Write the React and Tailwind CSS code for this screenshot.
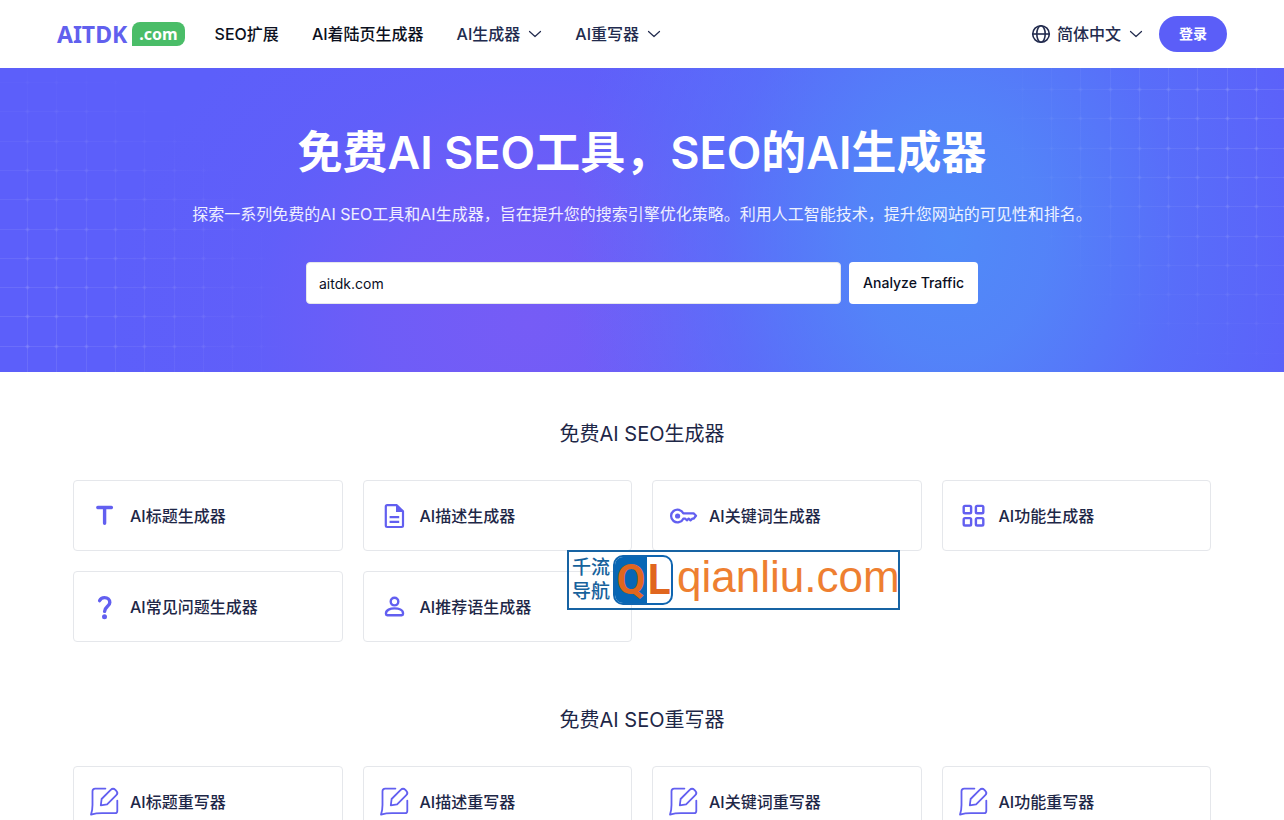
import React, { useState } from "react";

const ICONS = {
  title: (
    <g fill="none" stroke="currentColor" strokeWidth="3.4" strokeLinecap="round" strokeLinejoin="round">
      <path d="M7.8 5.5h13.6M14.6 5.5v15.8" />
    </g>
  ),
  description: (
    <>
      <path
        d="M7.2 3.2h9.6l6.2 6.2v14.2a1.4 1.4 0 0 1-1.4 1.4H7.2a1.4 1.4 0 0 1-1.4-1.4V4.6a1.4 1.4 0 0 1 1.4-1.4z"
        fill="none"
        stroke="currentColor"
        strokeWidth="2.2"
        strokeLinejoin="round"
      />
      <path d="M16 3v7h7z" fill="currentColor" />
      <path d="M9.6 15.2h9.6M9.6 19.8h9.6" stroke="currentColor" strokeWidth="2.2" />
    </>
  ),
  keyword: (
    <>
      <path
        d="M14.3 11.3A6.4 6.4 0 1 0 14.3 16.7h2l1.6 1.6 1.8-1.6 1.8 1.6 1.9-1.6h1.2l2.4-2.9-2.4-2.5z"
        fill="none"
        stroke="currentColor"
        strokeWidth="2.3"
        strokeLinejoin="round"
      />
      <circle cx="8.6" cy="14" r="2.6" fill="currentColor" />
    </>
  ),
  feature: (
    <g fill="none" stroke="currentColor" strokeWidth="2.4">
      <rect x="4.7" y="3.9" width="7.4" height="7.4" rx="1.3" />
      <rect x="16.9" y="3.9" width="7.4" height="7.4" rx="1.3" />
      <rect x="4.7" y="16.1" width="7.4" height="7.4" rx="1.3" />
      <rect x="16.9" y="16.1" width="7.4" height="7.4" rx="1.3" />
    </g>
  ),
  faq: (
    <>
      <path
        d="M9.6 7.7C10.5 5.6 12.3 4.6 14.6 4.6c3 0 5.2 2 5.2 4.8 0 4-5.2 4.4-5.2 9"
        fill="none"
        stroke="currentColor"
        strokeWidth="3.4"
        strokeLinecap="round"
      />
      <circle cx="14.5" cy="23.8" r="2.5" fill="currentColor" />
    </>
  ),
  testimonial: (
    <g fill="none" stroke="currentColor" strokeWidth="2.4">
      <circle cx="14.5" cy="8.6" r="3.8" />
      <path
        d="M6 20.2c0-3.2 4.2-4.8 8.5-4.8s8.5 1.6 8.5 4.8v.9a1.2 1.2 0 0 1-1.2 1.2H7.2A1.2 1.2 0 0 1 6 21.1z"
        strokeLinejoin="round"
      />
    </g>
  ),
  rewrite: (
    <g fill="none" stroke="currentColor" strokeWidth="1.8" strokeLinecap="round" strokeLinejoin="round">
      <path d="M15.4.6H5.2C3.3.6 2.5 1.6 2.5 3.3v13.8c0 3.9-.4 6.6-1.5 9.5 3.6-1 6.7-1.4 11-1.4h13.2c1.5 0 2.1-.7 2.1-2.2V12.6" />
      <path d="M10.8 17.3l.8-6.3 9.1-9.1c1.6-1.6 3.3-1.4 4.7 0l.9.9c1.4 1.4 1.4 2.9 0 4.3l-9.2 9.2z" />
    </g>
  ),
};

const generators = [
  { icon: "title", label: "AI标题生成器" },
  { icon: "description", label: "AI描述生成器" },
  { icon: "keyword", label: "AI关键词生成器" },
  { icon: "feature", label: "AI功能生成器" },
  { icon: "faq", label: "AI常见问题生成器" },
  { icon: "testimonial", label: "AI推荐语生成器" },
];

const rewriters = [
  { icon: "rewrite", label: "AI标题重写器" },
  { icon: "rewrite", label: "AI描述重写器" },
  { icon: "rewrite", label: "AI关键词重写器" },
  { icon: "rewrite", label: "AI功能重写器" },
];

const Chevron = () => (
  <svg viewBox="0 0 14 14" className="w-3.5 h-3.5" fill="none" stroke="currentColor" strokeWidth="1.2" strokeLinecap="round" strokeLinejoin="round" aria-hidden="true">
    <path d="M1.5 4.5L7 9.5l5.5-5" />
  </svg>
);

const Globe = () => (
  <svg viewBox="0 0 20 20" className="w-5 h-5" fill="none" stroke="currentColor" strokeWidth="1.6" aria-hidden="true">
    <circle cx="10" cy="10" r="8.3" />
    <ellipse cx="10" cy="10" rx="4.2" ry="8.3" />
    <path d="M1.7 10h16.6" />
  </svg>
);

const Header = () => (
  <header className="bg-white px-4">
    <div className="max-w-[1170px] h-[68px] mx-auto flex items-center justify-between">
      <div className="flex items-center">
        <a href="#" className="flex items-center gap-[5px] font-['Noto_Sans'] font-bold">
          <span className="text-[23px] leading-6 text-[#6160ee]">AITDK</span>
          <span className="h-6 px-[7px] rounded-lg rounded-bl-none bg-[#4abd68] text-white text-base leading-6">.com</span>
        </a>
        <nav className="ml-[30px] flex items-center gap-[33px] font-medium">
          <a href="#">SEO扩展</a>
          <a href="#">AI着陆页生成器</a>
          <button type="button" className="flex items-center gap-2 text-[#222b4e]">
            AI生成器 <Chevron />
          </button>
          <button type="button" className="flex items-center gap-2 text-[#222b4e]">
            AI重写器 <Chevron />
          </button>
        </nav>
      </div>
      <div className="flex items-center gap-4">
        <button type="button" className="flex items-center font-medium text-[#222b4e]">
          <Globe />
          <span className="ml-1.5 mr-2">简体中文</span>
          <Chevron />
        </button>
        <button type="button" className="h-9 px-5 rounded-full bg-[#5b5ef8] text-white text-sm font-bold">
          登录
        </button>
      </div>
    </div>
  </header>
);

const GRID_STEP = 29.3;
const steps = Array.from({ length: 12 }, (_, i) => i);

// faint grid lines that fade out from the given corner, with a soft dot on each crossing
const HeroGrid = ({ id, x0, y0, cx, cy, className }) => (
  <svg viewBox="0 0 330 304" className={className} aria-hidden="true">
    <defs>
      <radialGradient id={id} gradientUnits="userSpaceOnUse" cx={cx} cy={cy} r="290">
        <stop offset="0" stopColor="#fff" stopOpacity="0.1" />
        <stop offset="0.5" stopColor="#fff" stopOpacity="0.06" />
        <stop offset="1" stopColor="#fff" stopOpacity="0" />
      </radialGradient>
    </defs>
    <g fill={`url(#${id})`}>
      {steps.map((i) => (
        <rect key={`v${i}`} x={Math.round(x0 + i * GRID_STEP)} y="0" width="1" height="304" />
      ))}
      {steps.map((i) => (
        <rect key={`h${i}`} x="0" y={Math.round(y0 + i * GRID_STEP)} width="330" height="1" />
      ))}
      {steps.map((i) =>
        steps.map((j) => (
          <circle
            key={`c${i}-${j}`}
            cx={Math.round(x0 + i * GRID_STEP) + 0.5}
            cy={Math.round(y0 + j * GRID_STEP) + 0.5}
            r="2"
          />
        ))
      )}
    </g>
  </svg>
);

const Hero = () => {
  const [site, setSite] = useState("aitdk.com");

  return (
    <section className="relative overflow-hidden text-white text-center px-4 pt-[60px] pb-[68px] bg-[#5c5ffa] bg-[radial-gradient(ellipse_380px_480px_at_74%_56%,#508af8_0%,#5288f8e0_25%,#5578f990_60%,#5c5ffa00_100%),radial-gradient(ellipse_420px_380px_at_41%_84%,#765cf6_0%,#745cf6c0_35%,#685ef860_65%,#5c5ffa00_100%)]">
      <HeroGrid id="grid-left" x0={27} y0={14} cx={0} cy={270} className="absolute left-0 top-0 w-[330px] h-[304px]" />
      <HeroGrid id="grid-right" x0={9} y0={21} cx={330} cy={20} className="absolute right-0 top-0 w-[330px] h-[304px]" />
      <div className="relative">
        <h1 className="text-[45px] leading-[50px] font-semibold">免费AI SEO工具，SEO的AI生成器</h1>
        <p className="mt-6 text-base text-white/90">
          探索一系列免费的AI SEO工具和AI生成器，旨在提升您的搜索引擎优化策略。利用人工智能技术，提升您网站的可见性和排名。
        </p>
        <form className="mt-9 max-w-2xl mx-auto flex gap-2" onSubmit={(e) => e.preventDefault()}>
          <input
            type="text"
            aria-label="网站"
            value={site}
            onChange={(e) => setSite(e.target.value)}
            className="flex-1 min-w-0 h-[42px] px-3 rounded bg-white border border-[#e5e7eb] text-sm text-[#0a0f1f] outline-none"
          />
          <button type="submit" className="h-[42px] px-3.5 rounded bg-white text-sm font-medium text-[#0a0f1f]">
            Analyze Traffic
          </button>
        </form>
      </div>
    </section>
  );
};

const ToolSection = ({ title, tools }) => (
  <section>
    <h2 className="text-xl leading-7 text-center text-[#1e2747]">{title}</h2>
    <div className="mt-8 grid grid-cols-2 lg:grid-cols-4 gap-5">
      {tools.map((tool) => (
        <a
          key={tool.label}
          href="#"
          className="min-h-[71px] px-4 flex items-center gap-3 border border-[#e5e7eb] rounded text-[#1e2747] font-medium"
        >
          <svg viewBox="0 0 28 28" className="w-7 h-7 shrink-0 overflow-visible text-[#625ff0]" aria-hidden="true">
            {ICONS[tool.icon]}
          </svg>
          {tool.label}
        </a>
      ))}
    </div>
  </section>
);

const Watermark = () => (
  <div className="absolute left-[567px] top-[550px] flex items-center w-[333px] h-[60px] border-2 border-[#1763a3] whitespace-nowrap">
    <div className="w-11 shrink-0 text-center text-[19px] leading-6 font-medium text-[#17629c]">
      千流
      <br />
      导航
    </div>
    <div className="w-[60px] h-[50px] shrink-0 flex overflow-hidden rounded-[10px] border-2 border-[#0f65b0] bg-white font-['Roboto'] font-bold text-[#e0661f] text-[42px] leading-[46px]">
      <span className="w-[32px] shrink-0 bg-[#0766b5] text-center">Q</span>
      <span className="flex-1 text-center">L</span>
    </div>
    <div className="ml-1 pb-1.5 text-[44px] leading-[50px] font-['Liberation_Sans'] text-[#ee7f31]">qianliu.com</div>
  </div>
);

const App = () => {
  return (
    <div className="relative h-screen overflow-hidden bg-white text-[#0b1020] font-['Inter','Noto_Sans_CJK_SC',sans-serif]">
      <Header />
      <Hero />
      <main className="max-w-[1170px] mx-auto px-4 py-12 flex flex-col gap-16">
        <ToolSection title="免费AI SEO生成器" tools={generators} />
        <ToolSection title="免费AI SEO重写器" tools={rewriters} />
      </main>
      <Watermark />
    </div>
  );
};

export default App;
